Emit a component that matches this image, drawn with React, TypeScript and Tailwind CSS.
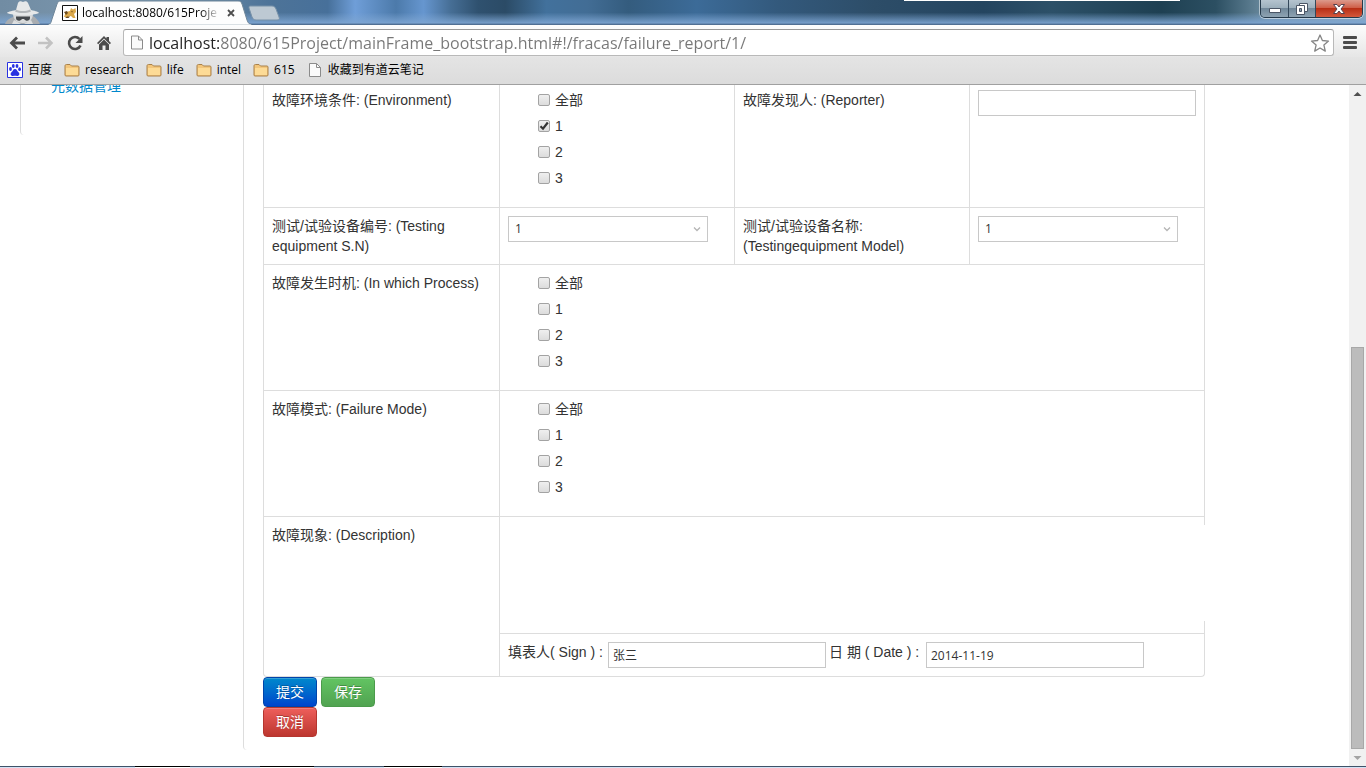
import React from "react";

const UI = "font-['Open_Sans','Noto_Sans_CJK_SC',sans-serif]";

function IncognitoIcon() {
  return (
    <svg viewBox="0 0 48 25" className="h-[25px] w-12 shrink-0" aria-hidden="true">
      <path d="M5 24c2-5 6-6 10-8h18c3 2 5 4 7 8z" fill="#a9adb1" />
      <path d="M13 13c0 6 3 10 10 10s10-4 10-10z" fill="#d8dadb" />
      <path d="M16 10 18 3c1-2 3-2 5-1 2-1 4-1 5 1l3 7c5 1 8 2 8 3-6 3-26 3-32 0 0-1 4-2 9-3z" fill="#e6e8e9" />
      <path d="M16 9.500c4 2 10 2 14 0l1 2c-5 2-11 2-16 0z" fill="#b3b7ba" />
      <path d="M16 16.500h14v1.500c0 3-4 4-6 1h-2c-2 3-6 2-6-1z" fill="#45494d" />
      <path d="m14 20 7 4h-9zm17 0-7 4h9z" fill="#dcdedf" />
    </svg>
  );
}

function TitleBar() {
  return (
    <header className="relative flex h-[25px] shrink-0 overflow-hidden bg-[linear-gradient(180deg,rgba(130,175,225,0)_50%,rgba(125,165,210,0.9)_92%,#506f93_97%),linear-gradient(90deg,#718ca3_0%,#7d99b0_10%,#4d7398_20%,#47709a_24%,#6f9ed8_26%,#4c7aaa_29%,#6696cf_31%,#466e95_33%,#2f516f_35%,#2b4b66_37%,#42719c_40%,#426d95_43%,#345c7e_46%,#3c6b98_51%,#33597c_57%,#2d4d68_64%,#244560_72%,#2c5068_77%,#1e4052_85%,#2c4f62_89%,#7191a5_93%,#8ba7ba_100%)]">
      <IncognitoIcon />
      <div className={`relative flex w-[204px] items-center pl-[14px] text-black ${UI}`}>
        <svg viewBox="0 0 204 25" className="absolute inset-0 h-[25px] w-[204px]" aria-hidden="true">
          <path d="M0 25c3-1 3-3 4-6L9 4c1-2 1-3 4-3h177c3 0 3 1 4 3l5 16c1 3 2 4 5 5z" fill="#fdfdfd" stroke="#6f8699" strokeWidth="1" />
          <path d="M1 24.500h202v.500H1z" fill="#fdfdfd" />
        </svg>
        <svg viewBox="0 0 16 16" className="relative size-4 shrink-0" aria-hidden="true">
          <path d="M.500.500h15v15H.500z" fill="#fff" stroke="#111" />
          <path d="M2 12c1-4 3-6 6-6l1-3 2 1.500L13.500 3 14 7l-2 2 1.500 4H11L9 11l-4 1z" fill="#dba84a" />
          <path d="M2 7l3-1 1 2-2 2zM9 6l2 .500-1 1zM12 7l1 .500M3 13l2-1.500h3L6.500 13z" fill="#6b4a1c" />
        </svg>
        <span className="relative ml-1 w-[138px] overflow-hidden text-xs whitespace-nowrap [mask-image:linear-gradient(90deg,#000_86%,transparent)]">
          localhost:8080/615Proje
        </span>
        <button type="button" aria-label="Close tab" className="relative ml-[7px]">
          <svg viewBox="0 0 8 8" className="size-2">
            <path d="M1 1l6 6M7 1L1 7" stroke="#4d4d4d" strokeWidth="1.800" />
          </svg>
        </button>
      </div>
      <button type="button" aria-label="New tab" className="-ml-1 self-center">
        <svg viewBox="0 0 32 16" className="h-4 w-8">
          <path d="M2 1h22c2 0 3 1 4 3l3 8c1 2 0 3-2 3H8c-2 0-3-1-4-3L1 3c0-1 0-2 1-2z" fill="#bdc9d3" stroke="#7791a8" />
        </svg>
      </button>
      <div className="absolute top-0 left-[904px] h-px w-[276px] bg-white" />
      <div className="mr-[3px] ml-auto flex h-[18px] overflow-hidden rounded-b-[5px] border border-t-0 border-[#25394a] shadow-[0_0_0_1px_rgba(255,255,255,0.5)]">
        <button type="button" aria-label="Minimize" className="grid w-7 place-items-center border-r border-[#34485a] bg-[linear-gradient(180deg,#b5c4cf_0%,#9db0bd_45%,#71889a_50%,#8ea3b2_100%)]">
          <svg viewBox="0 0 12 5" className="mt-1 h-[5px] w-3">
            <path d="M.500.500h11v4H.500z" fill="#fff" stroke="#4b5666" />
          </svg>
        </button>
        <button type="button" aria-label="Restore" className="grid w-[27px] place-items-center border-r border-[#34485a] bg-[linear-gradient(180deg,#b5c4cf_0%,#9db0bd_45%,#71889a_50%,#8ea3b2_100%)]">
          <svg viewBox="0 0 12 12" className="size-3">
            <path d="M3.500.500h8v8h-8z" fill="#fff" stroke="#4b5666" />
            <path d="M.500 2.500h8v9h-8z" fill="#fff" stroke="#4b5666" />
            <path d="M3.500 5.500h2v3h-2z" fill="#8ea2b0" stroke="#4b5666" />
          </svg>
        </button>
        <button type="button" aria-label="Close" className="grid w-[46px] place-items-center bg-[linear-gradient(180deg,#dc9a8c_0%,#cf5f49_45%,#b82f16_50%,#d4583c_100%)]">
          <svg viewBox="0 0 12 10" className="h-[10px] w-3">
            <path d="M.500.500h3.500l2 2.500 2-2.500h3.500L8 5l3.500 4.500H8L6 7 4 9.500H.500L4 5z" fill="#fff" stroke="#56414d" />
          </svg>
        </button>
      </div>
    </header>
  );
}

function PageIcon({ className }: { className: string }) {
  return (
    <svg viewBox="0 0 12 14" className={className} aria-hidden="true">
      <path d="M.500.500h7l4 4v9H.500z" fill="#fafafa" stroke="#8b8b8b" />
      <path d="M7.500.500v4h4" fill="none" stroke="#8b8b8b" />
    </svg>
  );
}

function Toolbar() {
  return (
    <div className="flex h-8 shrink-0 items-center bg-linear-to-b from-[#fdfdfd] to-[#e6e6e6] pt-[3px] pr-[9px] pl-[9px]">
      <button type="button" aria-label="Back" className="mr-[13px]">
        <svg viewBox="0 0 16 14" className="h-[14px] w-4">
          <path d="M8 1.500 2.500 7 8 12.500M2.500 7H16" fill="none" stroke="#4b4b4b" strokeWidth="2.800" />
        </svg>
      </button>
      <button type="button" aria-label="Forward" className="mr-[13px]">
        <svg viewBox="0 0 16 14" className="h-[14px] w-4">
          <path d="M8 1.500 13.500 7 8 12.500M13.500 7H0" fill="none" stroke="#c2c2c2" strokeWidth="2.500" />
        </svg>
      </button>
      <button type="button" aria-label="Reload" className="mr-[13px]">
        <svg viewBox="0 0 16 16" className="size-4">
          <path d="M12.500 4A6 6 0 1 0 13.500 10.500" fill="none" stroke="#4b4b4b" strokeWidth="2.600" />
          <path d="M15.500 1v7H8.500z" fill="#4b4b4b" />
        </svg>
      </button>
      <button type="button" aria-label="Home" className="mr-[11px]">
        <svg viewBox="0 0 16 16" className="size-4">
          <path d="M8 1 1 8l1.200 1.200L8 3.500l5.800 5.700L15 8l-2-2V2h-2.500v1.500z" fill="#4b4b4b" />
          <path d="M3 9.500l5-5 5 5V15H9.500v-4.500h-3V15H3z" fill="#4b4b4b" />
        </svg>
      </button>
      <div className="flex h-[27px] flex-1 items-center rounded-[3px] border border-[#b9b9b9] border-t-[#999] bg-white px-[7px]">
        <PageIcon className="h-[15px] w-3 shrink-0" />
        <input
          aria-label="Address"
          defaultValue="localhost:8080/615Project/mainFrame_bootstrap.html#!/fracas/failure_report/1/"
          className={`ml-[6px] min-w-0 flex-1 bg-[linear-gradient(90deg,#222_71px,#777_71px)] bg-clip-text text-base text-transparent outline-none ${UI}`}
        />
        <button type="button" aria-label="Bookmark this page" className="-mr-1">
          <svg viewBox="0 0 20 20" className="size-5">
            <path d="m10 2 2.400 5.500 6.100.600-4.600 4 1.400 6L10 15l-5.300 3.100 1.400-6-4.600-4 6.100-.600z" fill="#fff" stroke="#858585" strokeWidth="1.300" strokeLinejoin="round" />
          </svg>
        </button>
      </div>
      <button type="button" aria-label="Menu" className="ml-[9px] flex flex-col gap-[2px]">
        <span className="h-[3px] w-[14px] rounded-[1px] bg-[#4b4b4b]" />
        <span className="h-[3px] w-[14px] rounded-[1px] bg-[#4b4b4b]" />
        <span className="h-[3px] w-[14px] rounded-[1px] bg-[#4b4b4b]" />
      </button>
    </div>
  );
}

function FolderIcon() {
  return (
    <svg viewBox="0 0 16 14" className="h-[14px] w-4" aria-hidden="true">
      <path d="M1 3c0-1 .500-1.500 1.500-1.500H6L7.500 3H14c.700 0 1 .500 1 1v8c0 .700-.400 1-1 1H2c-.700 0-1-.400-1-1z" fill="#f3c67c" stroke="#a9814a" />
      <path d="M2 5h12v7H2z" fill="#fddb96" />
    </svg>
  );
}

function PawIcon() {
  return (
    <svg viewBox="0 0 16 16" className="size-4" aria-hidden="true">
      <path d="M.500.500h15v15H.500z" fill="#fff" stroke="#2932e1" />
      <g fill="#2932e1">
        <ellipse cx="3.500" cy="7" rx="1.400" ry="1.900" />
        <ellipse cx="6.300" cy="4" rx="1.400" ry="1.900" />
        <ellipse cx="10" cy="4" rx="1.400" ry="1.900" />
        <ellipse cx="12.600" cy="7.200" rx="1.400" ry="1.900" />
        <path d="M8 7c2 0 2 2 3.500 3.300 1.800 1.700.500 4-1.500 3.700-1.300-.300-2.700-.300-4 0-2 .300-3.300-2-1.500-3.700C6 9 6 7 8 7z" />
      </g>
    </svg>
  );
}

const bookmarks = [
  { label: "百度", icon: <PawIcon /> },
  { label: "research", icon: <FolderIcon /> },
  { label: "life", icon: <FolderIcon /> },
  { label: "intel", icon: <FolderIcon /> },
  { label: "615", icon: <FolderIcon /> },
  { label: "收藏到有道云笔记", icon: <PageIcon className="mx-[2px] h-[14px] w-3" /> },
];

function BookmarksBar() {
  return (
    <nav className={`flex h-7 shrink-0 items-center gap-3 border-b border-[#a0a0a0] bg-linear-to-b from-[#e4e4e4] to-[#dcdcdc] pb-px pl-[7px] text-xs text-black ${UI}`}>
      {bookmarks.map((b) => (
        <a key={b.label} href="#" className="flex items-center gap-[5px] whitespace-nowrap">
          {b.icon}
          {b.label}
        </a>
      ))}
    </nav>
  );
}

function CheckList({ name, checked }: { name: string; checked?: string }) {
  return (
    <ul className="mb-[11px] flex flex-col gap-[6px] pl-[30px]">
      {["全部", "1", "2", "3"].map((item) => (
        <li key={item} className="flex h-5 items-center">
          <label className="flex items-center gap-[5px]">
            <span className="grid size-3 place-items-center">
              <input
                type="checkbox"
                name={name}
                defaultChecked={item === checked}
                className="peer col-start-1 row-start-1 size-3 appearance-none rounded-[2px] border border-[#a3a3a3] bg-linear-to-b from-[#efefef] to-[#dcdcdc]"
              />
              <svg viewBox="0 0 10 10" className="pointer-events-none invisible col-start-1 row-start-1 size-[10px] peer-checked:visible" aria-hidden="true">
                <path d="M1.500 5.200 4 7.700 8.800 1.500" fill="none" stroke="#333" strokeWidth="2.200" />
              </svg>
            </span>
            {item}
          </label>
        </li>
      ))}
    </ul>
  );
}

function SelectBox({ id }: { id: string }) {
  return (
    <div className="mb-[10px] grid w-[200px] items-center">
      <select id={id} className={`col-start-1 row-start-1 h-[26px] w-full appearance-none border border-[#c8c8c8] bg-white px-[6px] text-xs text-[#333] ${UI}`}>
        <option>1</option>
      </select>
      <svg viewBox="0 0 8 6" className="pointer-events-none col-start-1 row-start-1 mr-[7px] h-[6px] w-2 justify-self-end" aria-hidden="true">
        <path d="M1 1.500l3 3 3-3" fill="none" stroke="#b5b5b5" strokeWidth="1.300" />
      </svg>
    </div>
  );
}

const cell = "border-t border-[#ddd] p-2 text-left align-top font-normal";
const inner = "border-t border-l border-[#ddd] p-2 text-left align-top font-normal";
const firstRow = "px-2 pt-[5px] pb-2 text-left align-top font-normal";
const box = `h-[26px] border border-[#c8c8c8] bg-white px-1 text-xs text-[#333] ${UI}`;
const button = "h-[30px] w-[54px] rounded-[4px] border text-sm leading-5 text-white [text-shadow:0_-1px_0_rgba(0,0,0,0.25)] shadow-[inset_0_1px_0_rgba(255,255,255,0.2)]";

function ReportForm() {
  return (
    <form onSubmit={(e) => e.preventDefault()}>
      <table className="w-full table-fixed border-separate border-spacing-0 rounded-b-[4px] border border-t-0 border-[#ddd]">
        <tbody>
          <tr>
            <th className={firstRow}>故障环境条件: (Environment)</th>
            <td className={`${firstRow} border-l border-[#ddd]`}>
              <CheckList name="environment" checked="1" />
            </td>
            <th className={`${firstRow} border-l border-[#ddd]`}>
              <label htmlFor="reporter">故障发现人: (Reporter)</label>
            </th>
            <td className={`${firstRow} border-l border-[#ddd]`}>
              <input id="reporter" className={`block w-full ${box}`} />
            </td>
          </tr>
          <tr>
            <th className={cell}>
              <label htmlFor="equipment-sn">测试/试验设备编号: (Testing equipment S.N)</label>
            </th>
            <td className={inner}>
              <SelectBox id="equipment-sn" />
            </td>
            <th className={inner}>
              <label htmlFor="equipment-model">测试/试验设备名称: (Testingequipment Model)</label>
            </th>
            <td className={inner}>
              <SelectBox id="equipment-model" />
            </td>
          </tr>
          <tr>
            <th className={cell}>故障发生时机: (In which Process)</th>
            <td className={inner} colSpan={3}>
              <CheckList name="process" />
            </td>
          </tr>
          <tr>
            <th className={cell}>故障模式: (Failure Mode)</th>
            <td className={inner} colSpan={3}>
              <CheckList name="mode" />
            </td>
          </tr>
          <tr>
            <th className={cell} rowSpan={2}>
              <label htmlFor="description">故障现象: (Description)</label>
            </th>
            <td className={inner} colSpan={3}>
              <textarea id="description" className="relative mb-1 block h-24 w-[calc(100%+9px)] resize-none bg-white outline-none" />
            </td>
          </tr>
          <tr>
            <td className={inner} colSpan={3}>
              <div className="flex gap-[3px]">
                <label htmlFor="sign" className="w-[97px] whitespace-nowrap">填表人( Sign ) :</label>
                <input id="sign" defaultValue="张三" className={`w-[218px] ${box}`} />
                <label htmlFor="date" className="w-[94px] whitespace-nowrap">日 期 ( Date ) :</label>
                <input id="date" defaultValue="2014-11-19" className={`w-[218px] ${box}`} />
              </div>
            </td>
          </tr>
        </tbody>
      </table>
      <div className="flex gap-1">
        <button type="submit" className={`${button} border-[#0044aa] bg-linear-to-b from-[#0088cc] to-[#0044cc]`}>提交</button>
        <button type="button" className={`${button} border-[#4b9b4b] bg-linear-to-b from-[#62c462] to-[#51a351]`}>保存</button>
      </div>
      <button type="button" className={`block ${button} border-[#b5362f] bg-linear-to-b from-[#ee5f5b] to-[#bd362f]`}>取消</button>
    </form>
  );
}

function Scrollbar() {
  return (
    <div className="flex w-[17px] shrink-0 flex-col bg-[#f1f1f1]" aria-hidden="true">
      <svg viewBox="0 0 17 17" className="size-[17px] shrink-0">
        <path d="M8.500 7 12.500 11h-8z" fill="#505050" />
      </svg>
      <div className="flex-[246]" />
      <div className="mx-[2px] flex-[402] border border-[#a8a8a8] bg-[#bcbcbc]" />
      <svg viewBox="0 0 17 17" className="size-[17px] shrink-0">
        <path d="M8.500 11 4.500 7h8z" fill="#a3a3a3" />
      </svg>
    </div>
  );
}

function TaskbarEdge() {
  return (
    <div className="flex h-[2px] shrink-0 border-t border-[#3f5268] bg-[#d3e3f5]">
      <div className="ml-[135px] flex gap-[70px]">
        <span className="-mt-px h-[2px] w-[55px] border-t border-black bg-white" />
        <span className="-mt-px h-[2px] w-[54px] border-t border-black bg-white" />
        <span className="-mt-px h-[2px] w-[58px] border-t border-black bg-white" />
      </div>
    </div>
  );
}

export default function App() {
  return (
    <div className="flex h-screen flex-col overflow-hidden bg-white">
      <TitleBar />
      <Toolbar />
      <BookmarksBar />
      <div className="flex min-h-0 flex-1 overflow-hidden font-['Liberation_Sans','Noto_Sans_CJK_SC',sans-serif] text-sm leading-5 text-[#333]">
        <aside className="w-[243px] shrink-0 pl-5">
          <div className="h-[50px] overflow-hidden rounded-bl-[4px] border-l border-[#ddd] pl-[30px]">
            <a href="#" className="-mt-[9px] block text-[#0088cc]">元数据管理</a>
          </div>
        </aside>
        <main className="mb-4 min-w-0 flex-1 rounded-bl-[4px] border-l border-[#ddd] pr-36 pl-[19px]">
          <ReportForm />
        </main>
        <Scrollbar />
      </div>
      <TaskbarEdge />
    </div>
  );
}
